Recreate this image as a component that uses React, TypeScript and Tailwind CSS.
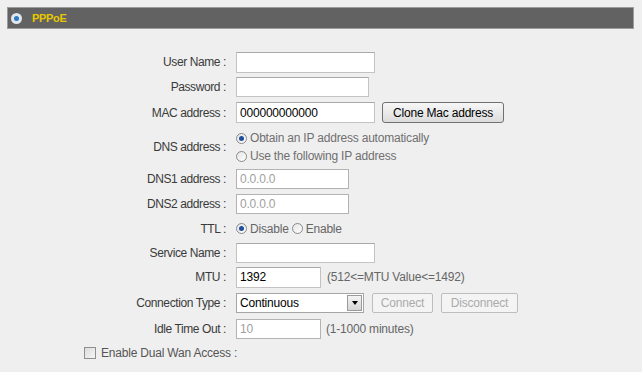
import React from "react";

const font = "font-['Liberation_Sans',Arial,sans-serif]";

function Label({ children }: { children: React.ReactNode }) {
  return (
    <div className="w-[227px] shrink-0 pr-[1px] text-right text-[12px] tracking-[-0.4px] text-[#3a3a3a]">{children}</div>
  );
}

function TextBox({ w, value, disabled, h = 20 }: { w: number; value?: string; disabled?: boolean; h?: number }) {
  return (
    <div
      className={`flex items-center border px-[3px] text-[12px] ${
        disabled ? "border-[#b3b3b3] bg-white text-[#a0a0a0]" : "border-[#c3c3c3] border-t-[#a9a9a9] bg-white text-black"
      }`}
      style={{ width: w, height: h }}
    >
      {value}
    </div>
  );
}

function Radio({ on }: { on?: boolean }) {
  return (
    <span className="inline-flex h-[11px] w-[11px] items-center justify-center rounded-full border border-[#8a8a8a] bg-gradient-to-br from-[#e4e4e4] to-white">
      {on && <span className="h-[5px] w-[5px] rounded-full bg-[#1f4e9c]" />}
    </span>
  );
}

function Row({ h, children }: { h: number; children: React.ReactNode }) {
  return (
    <div className="flex items-center" style={{ height: h }}>
      {children}
    </div>
  );
}

export default function App() {
  return (
    <div className={`h-[372px] w-[642px] bg-[#efefef] pt-[7px] ${font}`}>
      <div className="ml-[7px] flex h-[22px] w-[627px] items-center border border-[#9c9c9c] bg-[#626262] pl-[3px]">
        <span className="inline-flex h-[11px] w-[11px] items-center justify-center rounded-full bg-[#dfe6ee]">
          <span className="h-[5px] w-[5px] rounded-full bg-[#2c79c2]" />
        </span>
        <span className="ml-[10px] text-[11px] font-bold tracking-[-0.3px] text-[#e6c800]">PPPoE</span>
      </div>

      <div className="mt-[21px] flex flex-col text-[12px] tracking-[-0.2px]">
        <Row h={24}>
          <Label>User Name :</Label>
          <div className="ml-[9px]"><TextBox w={139} h={21} /></div>
        </Row>
        <Row h={25}>
          <Label>Password :</Label>
          <div className="ml-[9px]"><TextBox w={133} /></div>
        </Row>
        <Row h={27}>
          <Label>MAC address :</Label>
          <div className="ml-[9px] flex items-center gap-[7px]">
            <TextBox w={139} h={21} value="000000000000" />
            <button className="h-[21px] w-[122px] rounded-[3px] border border-[#707070] bg-gradient-to-b from-[#f7f7f7] to-[#dcdcdc] text-[12px] tracking-[-0.2px] text-black">
              Clone Mac address
            </button>
          </div>
        </Row>
        <div className="flex h-[41px] items-center">
          <Label>DNS address :</Label>
          <div className="ml-[9px] flex flex-col pt-[1px] text-[#707070]">
            <div className="flex h-[18px] items-center gap-[3px]"><Radio on />Obtain an IP address automatically</div>
            <div className="flex h-[18px] items-center gap-[3px]"><Radio />Use the following IP address</div>
          </div>
        </div>
        <Row h={24}>
          <Label>DNS1 address :</Label>
          <div className="ml-[9px]"><TextBox w={113} value="0.0.0.0" disabled /></div>
        </Row>
        <Row h={25}>
          <Label>DNS2 address :</Label>
          <div className="ml-[9px]"><TextBox w={113} value="0.0.0.0" disabled /></div>
        </Row>
        <Row h={25}>
          <Label>TTL :</Label>
          <div className="ml-[9px] flex items-center gap-[3px] text-[#666]">
            <Radio on />Disable<Radio />Enable
          </div>
        </Row>
        <Row h={23}>
          <Label>Service Name :</Label>
          <div className="ml-[9px]"><TextBox w={139} /></div>
        </Row>
        <Row h={26}>
          <Label>MTU :</Label>
          <div className="ml-[9px] flex items-center gap-[6px]">
            <TextBox w={85} h={21} value="1392" />
            <span className="text-[#666]">(512&lt;=MTU Value&lt;=1492)</span>
          </div>
        </Row>
        <Row h={26}>
          <Label>Connection Type :</Label>
          <div className="ml-[9px] flex items-center gap-[8px]">
            <div className="flex h-[20px] w-[128px] items-center justify-between border border-[#a5a5a5] bg-white pl-[3px] pr-[1px] text-black">
              Continuous
              <span className="flex h-[16px] w-[15px] items-center justify-center border border-[#9a9a9a] bg-gradient-to-b from-[#f4f4f4] to-[#d6d6d6]">
                <span className="h-0 w-0 border-x-[3.5px] border-t-[4px] border-x-transparent border-t-black" />
              </span>
            </div>
            <button className="h-[20px] w-[61px] rounded-[2px] border border-[#bdbdbd] bg-[#f4f4f4] text-[12px] tracking-[-0.2px] text-[#ababab]">Connect</button>
            <button className="h-[20px] w-[77px] rounded-[2px] border border-[#bdbdbd] bg-[#f4f4f4] text-[12px] tracking-[-0.2px] text-[#ababab]">Disconnect</button>
          </div>
        </Row>
        <Row h={26}>
          <Label>Idle Time Out :</Label>
          <div className="ml-[9px] flex items-center gap-[5px]">
            <TextBox w={85} value="10" disabled />
            <span className="text-[#666]">(1-1000 minutes)</span>
          </div>
        </Row>
        <Row h={22}>
          <div className="ml-[84px] flex items-center gap-[5px] text-[#555]">
            <span className="h-[12px] w-[12px] border border-[#8f8f8f] bg-gradient-to-br from-[#dcdcdc] to-[#f6f6f6]" />
            Enable Dual Wan Access :
          </div>
        </Row>
      </div>
    </div>
  );
}
